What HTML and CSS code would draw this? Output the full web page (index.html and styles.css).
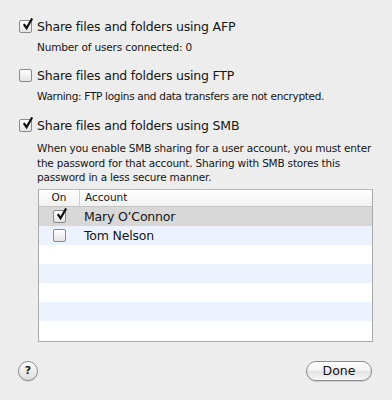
FILE: index.html
```html
<!DOCTYPE html>
<html lang="en">
<head>
  <meta charset="UTF-8">
  <title>File Sharing Options</title>
  <link rel="stylesheet" href="styles.css">
</head>
<body>
<div class="sheet">
  <div class="option">
    <span class="box checked"><svg viewBox="0 0 14 14"><path d="M3 6.5 L6 11 L12 0.5"/></svg></span>
    <span class="label">Share files and folders using AFP</span>
  </div>
  <p class="note note-afp">Number of users connected: 0</p>

  <div class="option option-ftp">
    <span class="box"></span>
    <span class="label">Share files and folders using FTP</span>
  </div>
  <p class="note note-ftp">Warning: FTP logins and data transfers are not encrypted.</p>

  <div class="option option-smb">
    <span class="box checked"><svg viewBox="0 0 14 14"><path d="M3 6.5 L6 11 L12 0.5"/></svg></span>
    <span class="label">Share files and folders using SMB</span>
  </div>
  <p class="note desc">When you enable SMB sharing for a user account, you must enter the password for that account. Sharing with SMB stores this password in a less secure manner.</p>

  <div class="accounts">
    <div class="head">
      <div class="col-on">On</div>
      <div class="col-account">Account</div>
    </div>
    <div class="row selected">
      <div class="col-on"><span class="box small checked"><svg viewBox="0 0 14 14"><path d="M3 6.5 L6 11 L12 0.5"/></svg></span></div>
      <div class="col-account">Mary O’Connor</div>
    </div>
    <div class="row stripe">
      <div class="col-on"><span class="box small"></span></div>
      <div class="col-account">Tom Nelson</div>
    </div>
    <div class="row"></div>
    <div class="row stripe"></div>
    <div class="row"></div>
    <div class="row stripe"></div>
    <div class="row"></div>
  </div>

  <div class="footer">
    <button class="help">?</button>
    <button class="done">Done</button>
  </div>
</div>
</body>
</html>
```

FILE: styles.css
```css
body {
  margin: 0;
  background: #ededed;
  font-family: "DejaVu Sans", Verdana, sans-serif;
  color: #151515;
}
.sheet {
  width: 392px;
  height: 400px;
  padding: 17px 19px 0 19px;
  box-sizing: border-box;
}
.option {
  display: flex;
  align-items: center;
  height: 18px;
}
.option-ftp {
  margin-top: 12px;
}
.option-smb {
  margin-top: 13px;
}
.label {
  margin-left: 5px;
  font-size: 12.5px;
  letter-spacing: -0.2px;
}
.box {
  width: 13px;
  height: 13px;
  box-sizing: border-box;
  border: 1px solid #8a8a8a;
  border-radius: 2px;
  background: linear-gradient(#ffffff, #e4e4e4);
  position: relative;
  flex: none;
  display: inline-block;
}
.box svg {
  position: absolute;
  left: 1px;
  top: -3px;
  width: 13px;
  height: 13px;
  fill: none;
  stroke: #111;
  stroke-width: 2.4;
}
.note {
  margin: 5px 0 0 18px;
  font-size: 10.5px;
  line-height: 14px;
  letter-spacing: -0.15px;
}
.note-ftp {
  margin-top: 5px;
  letter-spacing: -0.3px;
}
.desc {
  margin-top: 7px;
  line-height: 14.5px;
  width: 340px;
  letter-spacing: -0.2px;
}
.accounts {
  margin: 4px 0 0 19px;
  width: 335px;
  height: 153px;
  box-sizing: border-box;
  border: 1px solid #a9a9a9;
  border-top-color: #b9b9b9;
  background: #fff;
  overflow: hidden;
  font-size: 12px;
}
.head {
  display: flex;
  height: 16px;
  line-height: 15px;
  border-bottom: 1px solid #c6c6c6;
  background: linear-gradient(#ffffff, #f1f1f1);
  font-size: 10.5px;
}
.head .col-on {
  border-right: 1px solid #d0d0d0;
  text-align: center;
}
.row {
  display: flex;
  align-items: center;
  height: 19px;
}
.row.stripe {
  background: #edf3fe;
}
.row.selected {
  background: #d8d8d8;
}
.col-on {
  width: 40px;
  display: flex;
  justify-content: center;
  align-items: center;
}
.head .col-on {
  display: block;
}
.col-account {
  padding-left: 5px;
}
.row .col-account {
  font-size: 12.5px;
  letter-spacing: -0.2px;
}
.box.small {
  margin-left: 1px;
}
.footer {
  display: flex;
  justify-content: space-between;
  align-items: center;
  margin-top: 19px;
  padding-right: 1px;
}
.help {
  width: 20px;
  height: 20px;
  border-radius: 50%;
  border: 1px solid #8c8c8c;
  background: linear-gradient(#ffffff, #dcdcdc);
  font-family: "DejaVu Sans", sans-serif;
  font-weight: bold;
  font-size: 11px;
  padding: 0;
  color: #222;
  margin-left: -1px;
  box-shadow: 0 1px 1px rgba(0,0,0,0.15);
}
.done {
  width: 66px;
  height: 20px;
  border-radius: 10px;
  border: 1px solid #8c8c8c;
  background: linear-gradient(#ffffff 0%, #f1f1f1 50%, #e2e2e2 51%, #f7f7f7 100%);
  font-family: "DejaVu Sans", sans-serif;
  font-size: 12.5px;
  padding: 0;
  color: #111;
  box-shadow: 0 1px 1px rgba(0,0,0,0.15);
}
```
